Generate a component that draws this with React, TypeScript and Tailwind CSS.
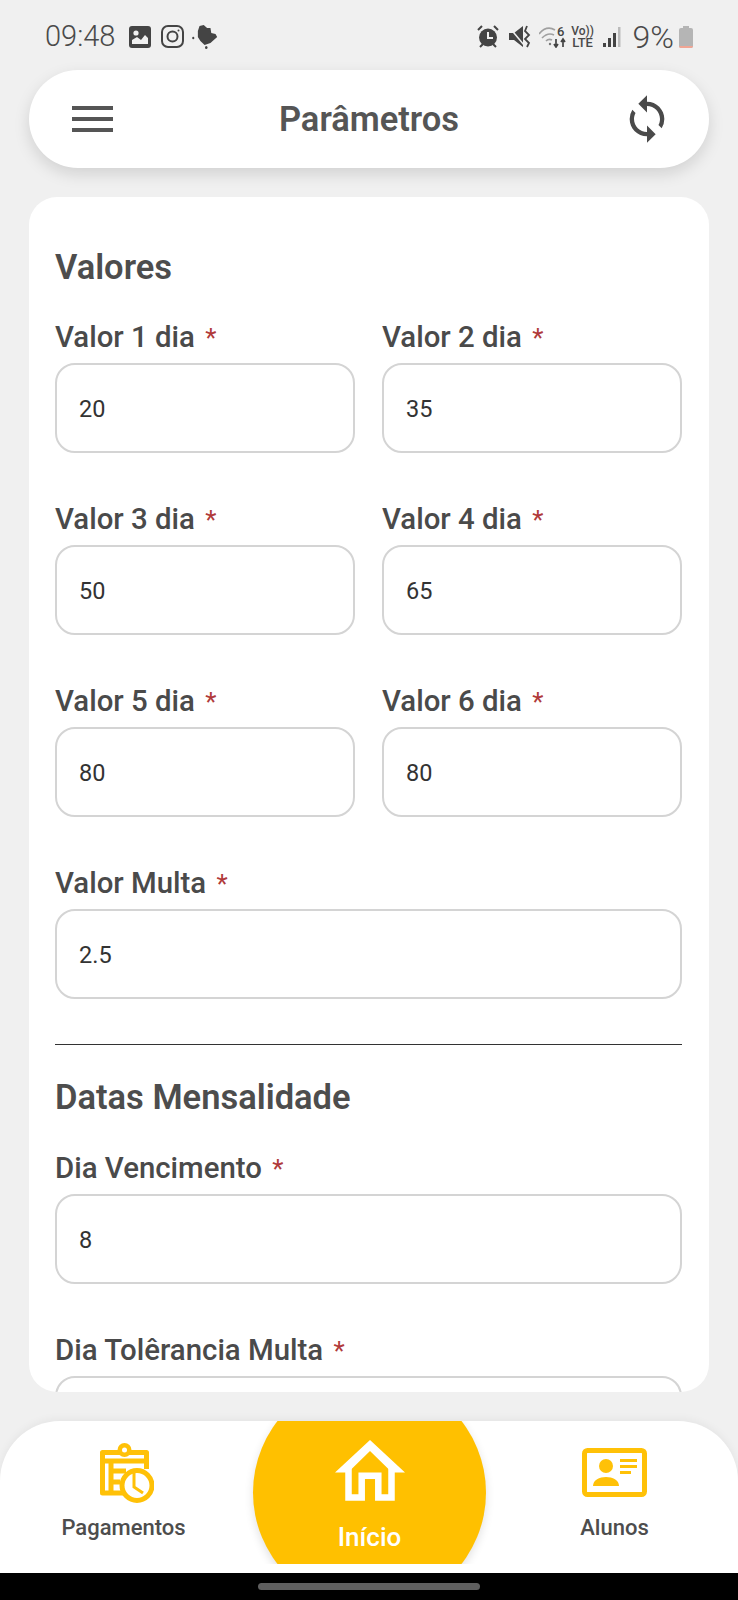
import { MdSync } from 'react-icons/md'

function Field({ label, value }: { label: string; value: string }) {
  return (
    <div className="flex-1">
      <div className="h-[26px] leading-[29px] text-[29.4px] font-medium text-[#4a4a4a] whitespace-nowrap">
        {label} <span className="text-[26px] font-normal text-[#b03a3a] ml-[3px]">*</span>
      </div>
      <div className="mt-[14px] h-[90px] rounded-[20px] border-2 border-[#d4d4d4] flex items-center pl-[22px] pt-[4px] text-[23.5px] text-[#333]">
        {value}
      </div>
    </div>
  )
}

function StatusLeft() {
  return (
    <div className="flex items-center text-[#4a4a4a]">
      <span className="text-[29px] font-light leading-none w-[84px]">09:48</span>
      <svg width="22" height="22" viewBox="0 0 22 22">
        <rect x="0" y="0" width="22" height="22" rx="3" fill="#444" />
        <circle cx="7" cy="7" r="2.6" fill="#f0f0f0" />
        <path d="M3 18 L3 14 L8 11 L12 14 L16 9 L19 12 L19 18 Z" fill="#f0f0f0" />
      </svg>
      <svg className="ml-[10px]" width="23" height="23" viewBox="0 0 23 23" fill="none" stroke="#444" strokeWidth="2">
        <rect x="1" y="1" width="21" height="21" rx="6" />
        <circle cx="11.5" cy="11.5" r="5" />
        <circle cx="17.5" cy="5.5" r="1" fill="#444" stroke="none" />
      </svg>
      <svg className="ml-[8px]" width="26" height="24" viewBox="0 0 31 24" preserveAspectRatio="none" fill="#444">
        <path d="M7 6 L9 1 L14 0 L18 3 L22 3 L23 8 L28 9 L30 12 L26 15 L22 18 L15 20 L10 16 L7 12 Z" />
        <circle cx="1.5" cy="13" r="1.3" />
        <circle cx="17" cy="22.5" r="1.5" />
      </svg>
    </div>
  )
}

function StatusRight() {
  return (
    <div className="flex items-center text-[#4a4a4a]">
      <svg width="22" height="23" viewBox="0 0 22 23">
        <circle cx="11" cy="12.5" r="9" fill="#444" />
        <path d="M11 7 V13 H16" stroke="#f0f0f0" strokeWidth="2" fill="none" />
        <path d="M1 5 L5 1 M21 5 L17 1 M3 22 L6 19 M19 22 L16 19" stroke="#444" strokeWidth="2" />
      </svg>
      <svg className="ml-[10px]" width="22" height="23" viewBox="0 0 22 23" fill="#444">
        <path d="M0 8 H5 L14 1 V22 L5 15 H0 Z" />
        <path d="M0 2 L15 20" stroke="#f0f0f0" strokeWidth="1.5" />
        <path d="M18 1 L16 6 L20 10 L16 14 L20 18 L18 22" stroke="#444" strokeWidth="1.8" fill="none" />
      </svg>
      <svg className="ml-[8px]" width="28" height="23" viewBox="0 0 28 23" fill="none" stroke="#a0a0a0" strokeWidth="1.7">
        <path d="M0 9 C5 3 11 2 16 5" />
        <path d="M3 13 C7 9 11 8 15 10" />
        <path d="M7 16 C9 14 11 14 13 15" />
        <circle cx="11" cy="19" r="1.2" fill="#777" stroke="none" />
        <text x="18" y="11" fontSize="13" fontWeight="500" fill="#444" stroke="none" fontFamily="Roboto, sans-serif">6</text>
        <path d="M17 14 V22 M15 19 L17 22 L19 19 M24 22 V14 M22 17 L24 14 L26 17" stroke="#444" />
      </svg>
      <span className="ml-[5px] flex flex-col text-[12px] leading-[12px] font-medium items-center w-[22px]">
        <span>Vo))</span>
        <span className="text-[13px]">LTE</span>
      </span>
      <svg className="ml-[9px]" width="19" height="22" viewBox="0 0 19 22">
        <rect x="0" y="17" width="3" height="4" fill="#444" />
        <rect x="5" y="12" width="3" height="9" fill="#444" />
        <rect x="10" y="7" width="3" height="14" fill="#444" />
        <rect x="15" y="1" width="2.5" height="20" fill="#bbb" />
      </svg>
      <span className="ml-[11px] text-[32px] font-light leading-none">9%</span>
      <div className="ml-[5px] w-[14px] h-[22px] flex flex-col items-center">
        <div className="w-[6px] h-[2px] bg-[#b5b5b5]" />
        <div className="w-full h-[20px] bg-[#b5b5b5] rounded-[2px] flex flex-col justify-end overflow-hidden">
          <div className="h-[2px] bg-[#f0a594]" />
        </div>
      </div>
    </div>
  )
}

function PagamentosIcon() {
  return (
    <svg width="54" height="60" viewBox="0 0 54 60" fill="none" stroke="#ffc107" strokeWidth="5">
      <path d="M24 50 H2.5 V9.5 H46.5 V26" strokeLinejoin="round" />
      <circle cx="24.5" cy="7" r="7" fill="#ffc107" stroke="none" />
      <circle cx="24.5" cy="7" r="2.5" fill="#fff" stroke="none" />
      <path d="M3 18 H45" />
      <path d="M11 18 V49 M11 28 H26 M11 39 H20" />
      <circle cx="37" cy="42.5" r="15" fill="#fff" />
      <path d="M34 30 V44 L43 50" strokeWidth="3" />
    </svg>
  )
}

function HomeIcon() {
  return (
    <svg width="70" height="61" viewBox="0 0 70 61" fill="#fff">
      <path d="M35 0 L70 32.5 H57 L35 11 L13 32.5 H0 Z" />
      <path d="M13.5 27 V57.5 H26.7 V35.7 H43.3 V57.5 H56.5 V27" fill="none" stroke="#fff" strokeWidth="6.5" />
    </svg>
  )
}

function AlunosIcon() {
  return (
    <svg width="65" height="49" viewBox="0 0 65 49" fill="#ffc107">
      <rect x="2.5" y="2.5" width="60" height="44" rx="3" fill="none" stroke="#ffc107" strokeWidth="5" />
      <circle cx="24" cy="18" r="7" />
      <path d="M11 38 C11 26 37 26 37 38 Z" />
      <rect x="38" y="11" width="17" height="3" />
      <rect x="38" y="17" width="17" height="3" />
      <rect x="38" y="23" width="11" height="3" />
    </svg>
  )
}

export default function App() {
  return (
    <div className="w-[738px] h-[1600px] bg-[#f0f0f0] overflow-hidden font-['Roboto',sans-serif] flex flex-col">
      <div className="h-[70px] flex items-center justify-between pt-[3px] pl-[45px] pr-[45px] shrink-0">
        <StatusLeft />
        <StatusRight />
      </div>

      <div className="mx-[29px] h-[98px] shrink-0 bg-white rounded-[49px] shadow-[0_6px_16px_rgba(0,0,0,0.13)] flex items-center justify-between pl-[43px] pr-[36px]">
        <div className="w-[41px] flex flex-col gap-[6.5px]">
          <div className="h-[4.5px] bg-[#555]" />
          <div className="h-[4.5px] bg-[#555]" />
          <div className="h-[4.5px] bg-[#555]" />
        </div>
        <div className="ml-[4px] pt-[1px] text-[34.5px] font-semibold text-[#555]">Parâmetros</div>
        <MdSync className="text-[#4a4a4a]" size={52} />
      </div>

      <div className="mt-[29px] mx-[29px] h-[1195px] shrink-0 bg-white rounded-[28px] overflow-hidden pl-[26px] pr-[27px]">
        <h2 className="mt-[54px] h-[32px] leading-[32px] text-[34.5px] font-semibold text-[#4d4d4d]">Valores</h2>
        <div className="mt-[40px] flex gap-[27px]">
          <Field label="Valor 1 dia" value="20" />
          <Field label="Valor 2 dia" value="35" />
        </div>
        <div className="mt-[52px] flex gap-[27px]">
          <Field label="Valor 3 dia" value="50" />
          <Field label="Valor 4 dia" value="65" />
        </div>
        <div className="mt-[52px] flex gap-[27px]">
          <Field label="Valor 5 dia" value="80" />
          <Field label="Valor 6 dia" value="80" />
        </div>
        <div className="mt-[52px]">
          <Field label="Valor Multa" value="2.5" />
        </div>
        <div className="mt-[45px] h-[1px] bg-[#333]" />
        <h2 className="mt-[36px] h-[32px] leading-[32px] text-[34.5px] font-semibold text-[#4d4d4d]">Datas Mensalidade</h2>
        <div className="mt-[41px]">
          <Field label="Dia Vencimento" value="8" />
        </div>
        <div className="mt-[52px]">
          <Field label="Dia Tolêrancia Multa" value="" />
        </div>
      </div>

      <div className="mt-[29px] h-[152px] shrink-0 bg-white rounded-t-[60px] shadow-[0_-2px_8px_rgba(0,0,0,0.05)] relative flex">
        <div className="w-[247px] flex flex-col items-center pt-[22px]">
          <div className="ml-[6px]">
            <PagamentosIcon />
          </div>
          <div className="mt-[8px] text-[22px] font-medium text-[#4d4d4d]">Pagamentos</div>
        </div>
        <div className="absolute left-[243px] top-0 w-[253px] h-[143px] overflow-hidden">
          <div className="absolute left-[10px] top-[-45px] w-[233px] h-[233px] rounded-full bg-[#ffc000] shadow-[0_4px_10px_rgba(0,0,0,0.12)] flex flex-col items-center pt-[64px]">
            <HomeIcon />
            <div className="mt-[17px] text-[26px] font-medium text-[#fff]">Início</div>
          </div>
        </div>
        <div className="ml-auto w-[247px] flex flex-col items-center pt-[27px]">
          <AlunosIcon />
          <div className="mt-[14px] text-[22px] font-medium text-[#4d4d4d]">Alunos</div>
        </div>
      </div>

      <div className="h-[27px] shrink-0 bg-black flex justify-center pt-[10px]">
        <div className="w-[222px] h-[7px] rounded-full bg-[#5f5f5f]" />
      </div>
    </div>
  )
}
